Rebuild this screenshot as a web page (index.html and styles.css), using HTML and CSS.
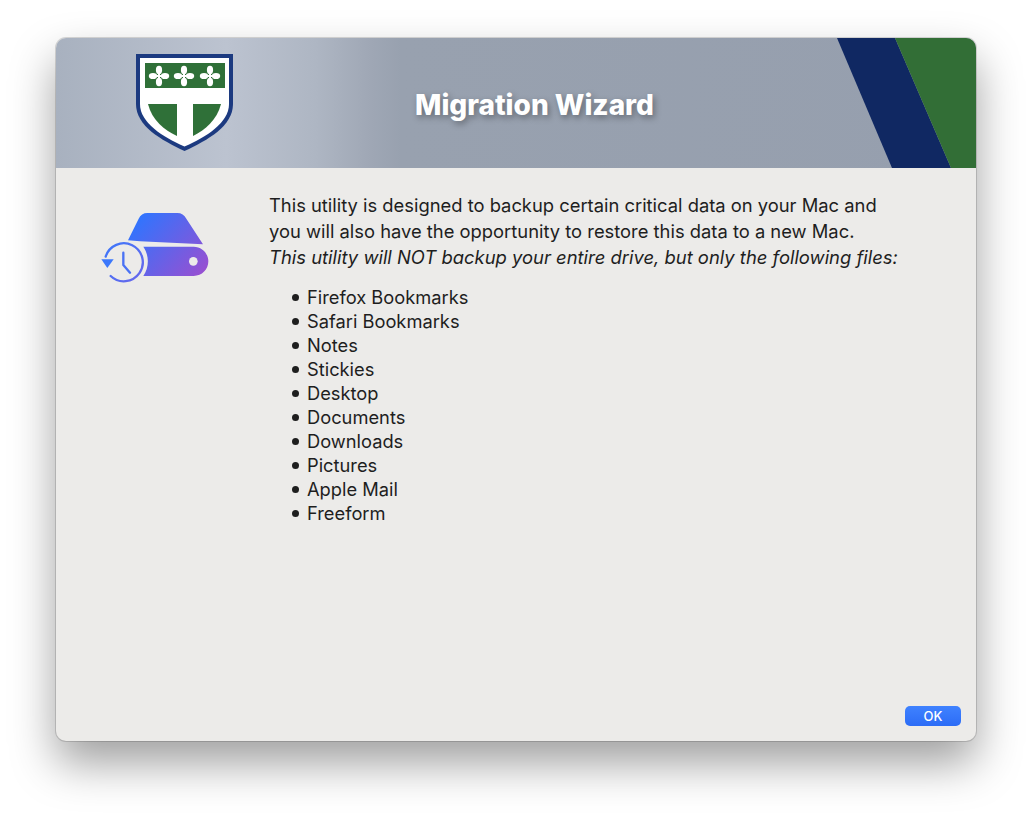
FILE: index.html
```html
<!DOCTYPE html>
<html lang="en">

<head>
    <meta charset="UTF-8">
    <meta name="viewport" content="width=device-width, initial-scale=1.0">
    <title>Migration Wizard</title>
    <link rel="stylesheet" href="styles.css">
</head>

<body>
    <div class="window">
        <div class="header">
            <svg class="stripes" viewBox="0 0 140 130" width="140" height="130">
                <polygon points="1,0 59,0 115,130 56,130" fill="#102862"/>
                <polygon points="59,0 140,0 140,130 115,130" fill="#326e36"/>
            </svg>
            <svg class="crest" viewBox="0 0 97 97" width="97" height="97">
                <path d="M0 0H97V50C97 72 72 86 48.500 97C25 86 0 72 0 50Z" fill="#1c3a80"/>
                <path d="M4 4H93V50C93 69 70 83 48.500 92.500C27 83 4 69 4 50Z" fill="#fff"/>
                <rect x="9" y="9" width="80" height="25" fill="#2f7038"/>
                <path d="M12 50H41V82C28 76 16 66 12 50Z" fill="#2f7038"/>
                <path d="M57 50H85C81 66 69 76 57 82Z" fill="#2f7038"/>
                <g class="clovers" fill="#fff">
                    <g id="clover">
                        <ellipse cx="23" cy="16" rx="3.100" ry="4.200"/>
                        <ellipse cx="23" cy="28" rx="3.100" ry="4.200"/>
                        <ellipse cx="17" cy="22" rx="4.200" ry="3.100"/>
                        <ellipse cx="29" cy="22" rx="4.200" ry="3.100"/>
                        <rect x="22" y="18" width="2" height="8"/>
                        <rect x="19" y="21" width="8" height="2"/>
                    </g>
                    <use href="#clover" x="25"/>
                    <use href="#clover" x="51"/>
                </g>
            </svg>
            <h1 class="title">Migration Wizard</h1>
        </div>

        <div class="content">
            <svg class="drive-icon" viewBox="0 0 390 270" width="130" height="90">
                <defs>
                    <linearGradient id="drive-grad" gradientUnits="userSpaceOnUse" x1="140" y1="50" x2="340" y2="230">
                        <stop offset="0" stop-color="#2e75ff"/>
                        <stop offset="1" stop-color="#9a4fd0"/>
                    </linearGradient>
                    <linearGradient id="clock-grad" gradientUnits="userSpaceOnUse" x1="40" y1="130" x2="160" y2="245">
                        <stop offset="0" stop-color="#3c78fb"/>
                        <stop offset="1" stop-color="#6a66ea"/>
                    </linearGradient>
                </defs>
                <path d="M114 121L146 56C151 45 160 39 172 39H262C274 39 283 45 289 56L339 133L150 124Z" fill="url(#drive-grad)"/>
                <path d="M160 140H311C336 140 355 160 355 184C355 208 336 228 311 228H160C178 202 178 166 160 140Z" fill="url(#drive-grad)"/>
                <circle cx="310" cy="184" r="13" fill="#ecebe9"/>
                <path d="M47 170A57 57 0 1 1 62 228" fill="none" stroke="url(#clock-grad)" stroke-width="7" stroke-linecap="round"/>
                <polygon points="34,178 71,178 52,204" fill="#3c78fb"/>
                <path d="M100 158V195L120 218" fill="none" stroke="#4a72f4" stroke-width="7" stroke-linecap="round" stroke-linejoin="round"/>
            </svg>
            <div class="text">
                <p class="intro">This utility is designed to backup certain critical data on your Mac and you will also have the opportunity to restore this data to a new Mac.<br><em>This utility will NOT backup your entire drive, but only the following files:</em></p>
                <ul class="files">
                    <li>Firefox Bookmarks</li>
                    <li>Safari Bookmarks</li>
                    <li>Notes</li>
                    <li>Stickies</li>
                    <li>Desktop</li>
                    <li>Documents</li>
                    <li>Downloads</li>
                    <li>Pictures</li>
                    <li>Apple Mail</li>
                    <li>Freeform</li>
                </ul>
            </div>
        </div>

        <div class="footer">
            <button class="ok-button">OK</button>
        </div>
    </div>
</body>

</html>
```

FILE: styles.css
```css
* {
    margin: 0;
    padding: 0;
    box-sizing: border-box;
}

body {
    font-family: Inter, "Liberation Sans", sans-serif;
    color: #1e1e1e;
    background-color: #fff;
    padding: 38px 56px 0;
    height: 815px;
    overflow: hidden;
}

.window {
    display: flex;
    flex-direction: column;
    width: 920px;
    height: 703px;
    background-color: #ecebe9;
    border-radius: 10px;
    overflow: hidden;
    box-shadow: 0 0 0 1px rgba(0, 0, 0, 0.14), 0 22px 45px rgba(0, 0, 0, 0.38);
}

.header {
    position: relative;
    display: flex;
    align-items: center;
    height: 130px;
    padding-left: 80px;
    background: linear-gradient(90deg, #a8b1bf 0, #bcc3d0 170px, #aeb6c3 260px, #9fa7b5 315px, #98a1af 345px, #969fae 100%);
}

.stripes {
    position: absolute;
    top: 0;
    right: 0;
}

.crest {
    flex-shrink: 0;
    margin-top: -1px;
}

.title {
    margin-left: 182px;
    padding-top: 3px;
    font-size: 28px;
    font-weight: 800;
    color: #fff;
    text-shadow: 2px 3px 6px rgba(0, 0, 0, 0.35);
}

.content {
    display: flex;
    flex: 1;
    gap: 49px;
    padding: 24px 0 0 34px;
}

.drive-icon {
    flex-shrink: 0;
    margin-top: 8px;
}

.text {
    width: 640px;
    font-size: 18.300px;
    line-height: 24px;
}

.intro {
    font-size: 18.360px;
    line-height: 26px;
}

.intro em {
    font-size: 18.420px;
}

.files {
    margin-top: 15px;
    padding-left: 23px;
    list-style: none;
}

.files li {
    display: flex;
    align-items: center;
    gap: 8px;
}

.files li::before {
    content: "";
    width: 7px;
    height: 7px;
    border-radius: 50%;
    background-color: #1e1e1e;
}

.footer {
    display: flex;
    justify-content: flex-end;
    padding: 0 15px 15px;
}

.ok-button {
    width: 56px;
    height: 20px;
    border: none;
    border-radius: 5px;
    background: linear-gradient(#3f82ff, #2c6cf6);
    color: #fff;
    font-family: inherit;
    font-size: 13px;
    font-weight: 500;
}
```
